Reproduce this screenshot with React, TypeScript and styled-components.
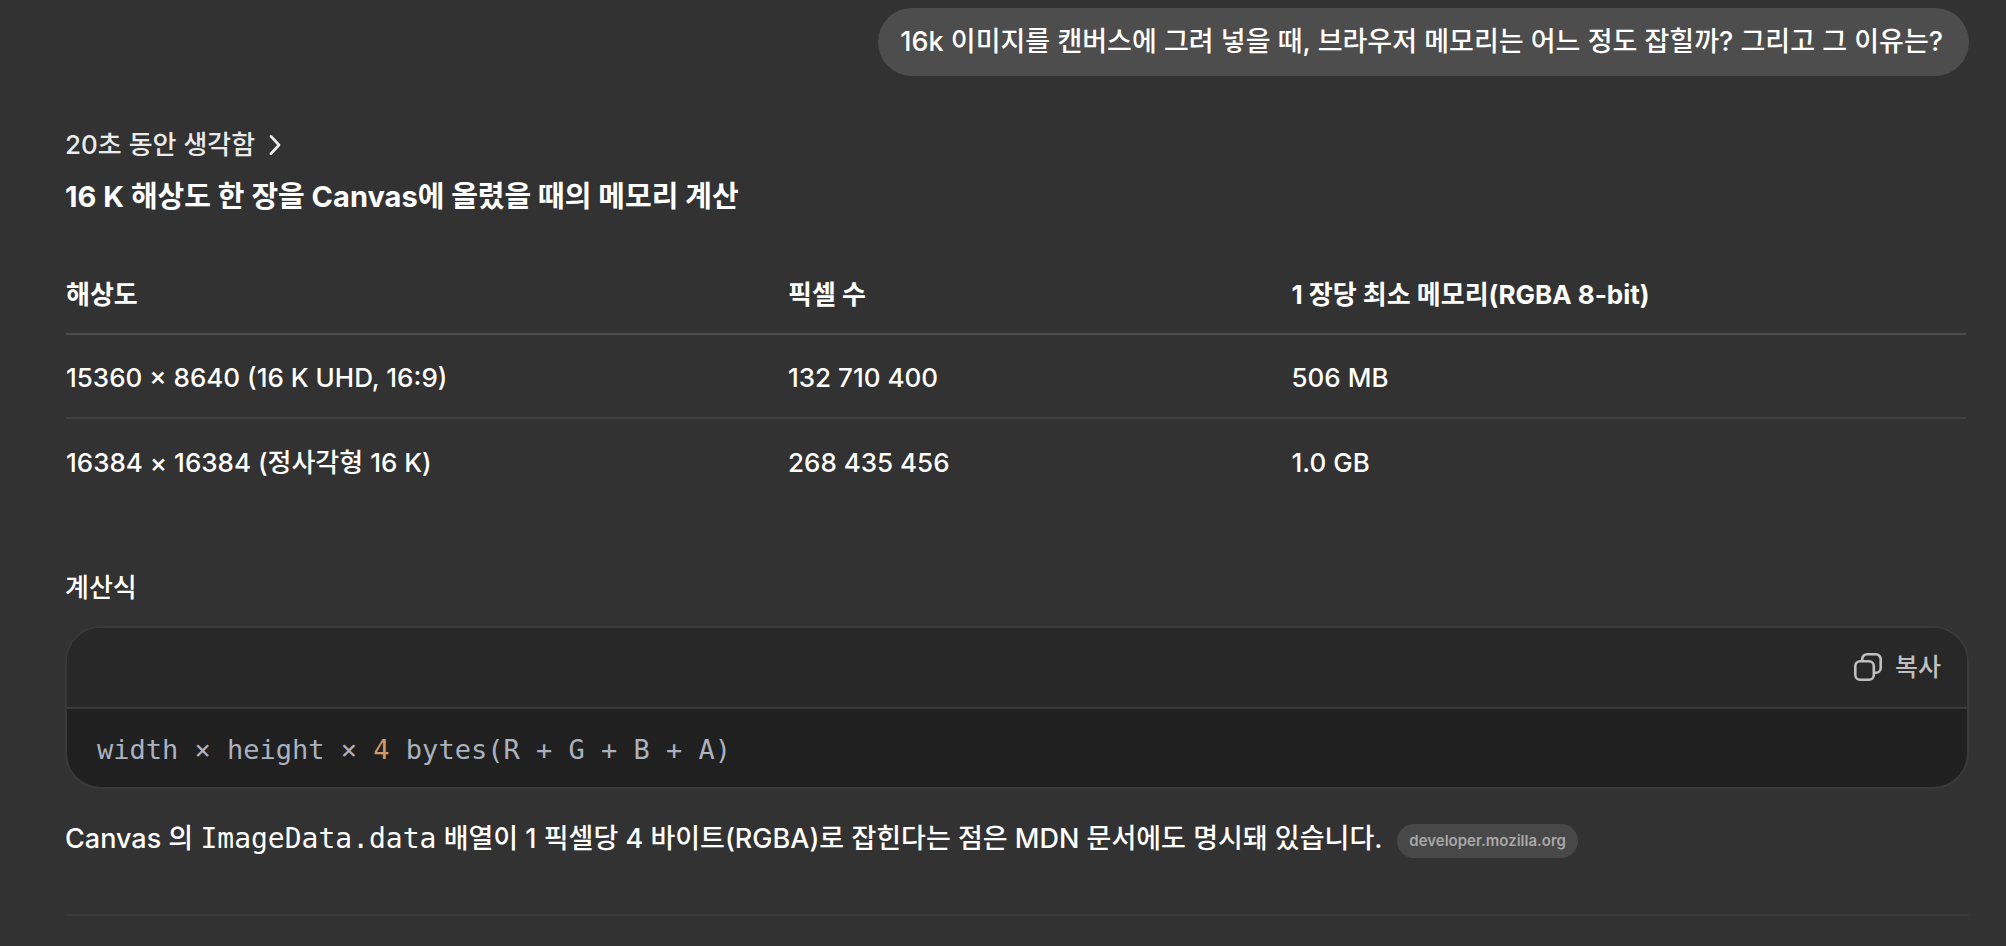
import React from "react";
import styled, { createGlobalStyle } from "styled-components";

const sans = `Inter, "Noto Sans CJK KR", sans-serif`;
const mono = `"DejaVu Sans Mono", "Liberation Mono", monospace`;

const GlobalStyle = createGlobalStyle`
  * { box-sizing: border-box; }
  html { background: #323232; }
  body { margin: 0; background: #323232; color: #fff; font: 500 27px/36px ${sans}; }
`;

const Thread = styled.main`
  display: flex;
  flex-direction: column;
  align-items: stretch;
  padding: 8px 37px 28px 65px;
`;

const UserMessage = styled.p`
  align-self: flex-end;
  margin: 0;
  padding: 16px 26px 16px 22px;
  border-radius: 34px;
  background: #4d4d4d;
`;

const Reply = styled.article`
  display: flex;
  flex-direction: column;
  padding-top: 51px;
`;

const ThinkingToggle = styled.button`
  display: flex;
  align-items: center;
  align-self: flex-start;
  gap: 14px;
  padding: 0;
  border: 0;
  background: none;
  color: #ebebeb;
  font: 500 26px/36px ${sans};
`;

const Title = styled.h2`
  margin: 16px 0 0;
  font-size: 29px;
  line-height: 36px;
  font-weight: 700;
`;

const ResolutionTable = styled.table`
  margin: 39px 3px 0 1px;
  border-collapse: collapse;
  table-layout: fixed;
  font-size: 26px;

  th, td { padding: 0; text-align: left; vertical-align: middle; }
  th { height: 80px; padding-top: 2px; font-weight: 700; border-bottom: 2px solid #4c4c4c; }
  td { height: 84px; padding-top: 4px; }
  tbody tr + tr td { border-top: 2px solid #404040; }
`;

const Col = styled.col<{ $width?: string }>`
  width: ${({ $width }) => $width ?? "auto"};
`;

const Subheading = styled.h3`
  margin: 68px 0 0;
  font-size: 26px;
  line-height: 36px;
  font-weight: 500;
`;

const CodeBlock = styled.section`
  margin-top: 20px;
  border: 2px solid #3a3a3a;
  border-radius: 36px;
  background: #202020;
  overflow: hidden;
`;

const CodeHeader = styled.header`
  display: flex;
  justify-content: flex-end;
  padding: 21px 26px 22px;
  border-bottom: 2px solid #3a3a3a;
  background: #282828;
`;

const CopyButton = styled.button`
  display: flex;
  align-items: center;
  gap: 13px;
  padding: 0;
  border: 0;
  background: none;
  color: #bfbfbf;
  font: 500 25px/36px ${sans};
`;

const Code = styled.pre`
  margin: 0;
  padding: 23px 30px 19px;
  color: #abb2bf;
  font: 400 27px/36px ${mono};

  code { font: inherit; }
`;

const NumberToken = styled.span`
  color: #d19a66;
`;

const Paragraph = styled.p`
  margin: 32px 0 0;
`;

const InlineCode = styled.code`
  font: 400 28px/36px ${mono};
`;

const SourceLink = styled.a`
  display: inline-block;
  margin-left: 8px;
  padding: 0 12px;
  border-radius: 17px;
  background: #484848;
  color: #a9a9a9;
  font-size: 15px;
  line-height: 34px;
  font-weight: 600;
  text-decoration: none;
  vertical-align: middle;
`;

const Divider = styled.hr`
  width: 100%;
  height: 2px;
  margin: 56px 0 0;
  border: 0;
  background: #3a3a3a;
`;

const rows = [
  ["15360 × 8640 (16 K UHD, 16:9)", "132 710 400", "506 MB"],
  ["16384 × 16384 (정사각형 16 K)", "268 435 456", "1.0 GB"],
];

const ChevronIcon = () => (
  <svg width="12" height="22" viewBox="0 0 12 22" fill="none" stroke="currentColor" strokeWidth="2.8" strokeLinecap="round" strokeLinejoin="round" aria-hidden="true">
    <path d="M2 2.4 10 11 2 19.6" />
  </svg>
);

const CopyIcon = () => (
  <svg width="28" height="28" viewBox="0 0 28 28" fill="none" stroke="currentColor" strokeWidth="2.6" aria-hidden="true">
    <rect x="1.3" y="8.2" width="18.5" height="18.5" rx="4.8" />
    <path d="M8.2 8.2V6.1A4.8 4.8 0 0 1 13 1.3H21.9A4.8 4.8 0 0 1 26.7 6.1V15A4.8 4.8 0 0 1 21.9 19.8H19.8" />
  </svg>
);

export default function App() {
  return (
    <>
      <GlobalStyle />
      <Thread lang="ko">
        <UserMessage>
          16k 이미지를 캔버스에 그려 넣을 때, 브라우저 메모리는 어느 정도 잡힐까? 그리고 그 이유는?
        </UserMessage>
        <Reply>
          <ThinkingToggle type="button">
            20초 동안 생각함
            <ChevronIcon />
          </ThinkingToggle>
          <Title>16 K 해상도 한 장을 Canvas에 올렸을 때의 메모리 계산</Title>
          <ResolutionTable>
            <colgroup>
              <Col $width="38%" />
              <Col $width="26.5%" />
              <Col />
            </colgroup>
            <thead>
              <tr>
                <th scope="col">해상도</th>
                <th scope="col">픽셀 수</th>
                <th scope="col">1 장당 최소 메모리(RGBA 8-bit)</th>
              </tr>
            </thead>
            <tbody>
              {rows.map((row) => (
                <tr key={row[0]}>
                  {row.map((cell) => (
                    <td key={cell}>{cell}</td>
                  ))}
                </tr>
              ))}
            </tbody>
          </ResolutionTable>
          <Subheading>계산식</Subheading>
          <CodeBlock>
            <CodeHeader>
              <CopyButton type="button">
                <CopyIcon />
                복사
              </CopyButton>
            </CodeHeader>
            <Code>
              <code>
                width × height × <NumberToken>4</NumberToken> bytes(R + G + B + A)
              </code>
            </Code>
          </CodeBlock>
          <Paragraph>
            Canvas 의 <InlineCode>ImageData.data</InlineCode> 배열이 1 픽셀당 4 바이트(RGBA)로 잡힌다는 점은 MDN
            문서에도 명시돼 있습니다. <SourceLink href="https://developer.mozilla.org">developer.mozilla.org</SourceLink>
          </Paragraph>
          <Divider />
        </Reply>
      </Thread>
    </>
  );
}
